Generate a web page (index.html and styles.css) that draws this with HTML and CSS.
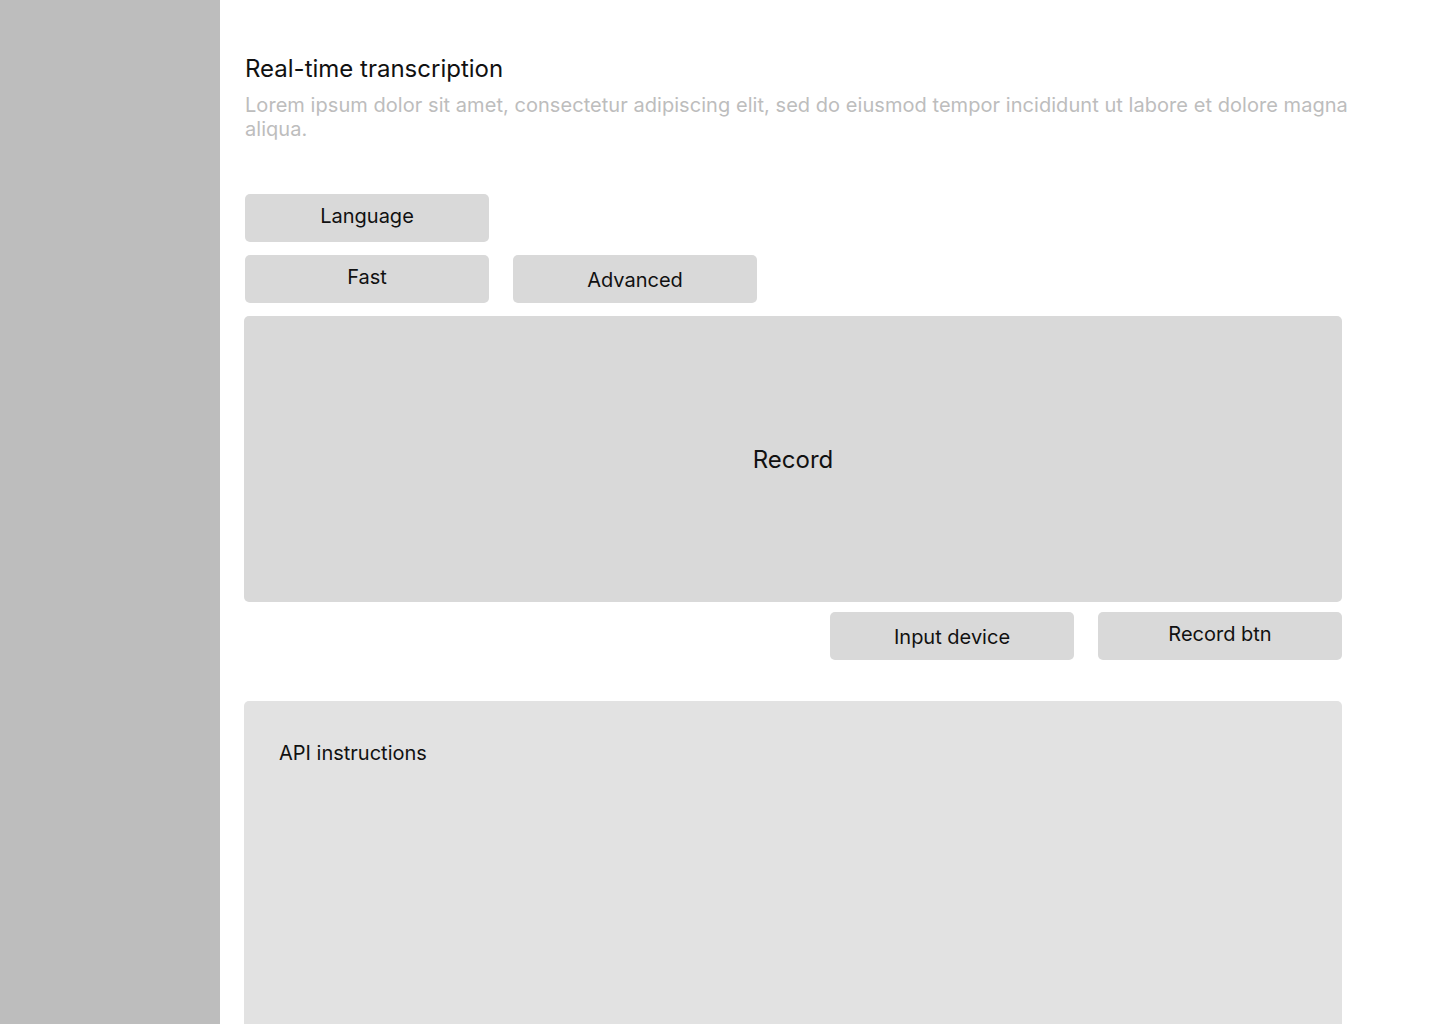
FILE: index.html
```html
<!DOCTYPE html>
<html lang="en">
<head>
    <meta charset="UTF-8">
    <meta name="viewport" content="width=device-width, initial-scale=1.0">
    <title>Real-time transcription</title>
    <link rel="stylesheet" href="styles.css">
</head>
<body>
    <div class="layout">
        <aside class="sidebar"></aside>

        <main class="main">
            <div class="header">
                <h1 class="title">Real-time transcription</h1>
                <p class="subtitle">Lorem ipsum dolor sit amet, consectetur adipiscing elit, sed do eiusmod tempor incididunt ut labore et dolore magna aliqua.</p>
            </div>

            <div class="options">
                <div class="row">
                    <button class="btn">Language</button>
                </div>
                <div class="row">
                    <button class="btn">Fast</button>
                    <button class="btn low">Advanced</button>
                </div>
            </div>

            <div class="record-area">Record</div>

            <div class="record-controls">
                <button class="btn low">Input device</button>
                <button class="btn">Record btn</button>
            </div>

            <section class="api-box">
                <p class="api-title">API instructions</p>
            </section>
        </main>
    </div>
</body>
</html>
```

FILE: styles.css
```css
* {
    box-sizing: border-box;
}

body {
    margin: 0;
    font-family: Inter, "Liberation Sans", sans-serif;
    color: #111;
    background-color: #fff;
}

.layout {
    display: flex;
    min-height: 100vh;
}

.sidebar {
    width: 220px;
    flex-shrink: 0;
    background-color: #bdbdbd;
}

.main {
    width: 1146px;
    padding: 54px 24px 0;
}

.header {
    margin: 0 -24px 0 1px;
}

.title {
    margin: 0;
    font-size: 24px;
    font-weight: 400;
    line-height: 29px;
}

.subtitle {
    margin: 10px 0 0 0;
    font-size: 20px;
    line-height: 24px;
    letter-spacing: 0.05px;
    color: #bdbdbd;
}

.options {
    display: flex;
    flex-direction: column;
    gap: 13px;
    margin: 53px 0 0 1px;
}

.row {
    display: flex;
    gap: 24px;
}

.btn {
    display: flex;
    align-items: center;
    justify-content: center;
    width: 244px;
    height: 48px;
    padding: 0 0 4px 0;
    border: none;
    border-radius: 5px;
    background-color: #d9d9d9;
    font-family: inherit;
    font-size: 20px;
    line-height: 24px;
    color: #111;
}

.btn.low {
    padding: 2px 0 0 0;
}

.record-area {
    display: flex;
    align-items: center;
    justify-content: center;
    height: 286px;
    margin-top: 13px;
    border-radius: 5px;
    background-color: #d9d9d9;
    font-size: 24px;
}

.record-controls {
    display: flex;
    justify-content: flex-end;
    gap: 24px;
    margin-top: 10px;
}

.api-box {
    height: 400px;
    margin-top: 41px;
    padding: 40px 35px;
    border-radius: 5px;
    background-color: #e2e2e2;
}

.api-title {
    margin: 0;
    font-size: 20px;
    line-height: 24px;
}
```
